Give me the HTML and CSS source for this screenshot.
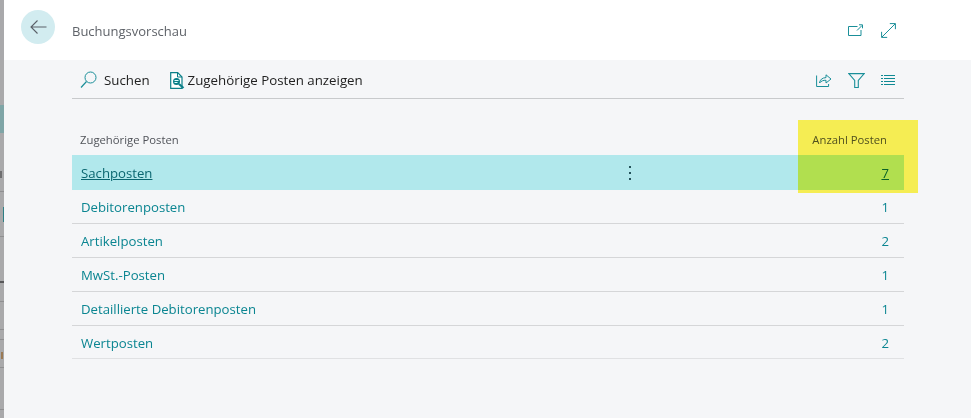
FILE: index.html
```html
<!DOCTYPE html>
<html lang="de">
<head>
<meta charset="utf-8">
<title>Buchungsvorschau</title>
<link rel="stylesheet" href="styles.css">
</head>
<body>
<div class="page">
  <aside class="backdrop">
    <i class="strip-teal"></i>
    <i class="strip-mark mark-ink"></i>
    <i class="strip-mark mark-teal"></i>
    <i class="strip-mark mark-orange"></i>
    <i class="strip-line l1"></i>
    <i class="strip-line l2"></i>
    <i class="strip-line l3"></i>
    <i class="strip-line l4"></i>
    <i class="strip-line l5"></i>
    <i class="strip-line l6"></i>
    <i class="strip-line l7"></i>
    <i class="strip-line l8"></i>
  </aside>
  <main class="dialog">
    <header class="titlebar">
      <button class="back" aria-label="Zurück">
        <svg width="17" height="14" viewBox="0 0 17 14"><path d="M16.500 7H1M7.500.5 1 7l6.500 6.500" fill="none" stroke="#5a6068" stroke-width="1.100"/></svg>
      </button>
      <h1 class="title">Buchungsvorschau</h1>
      <div class="window-actions">
        <svg width="15" height="12" viewBox="0 0 15 12"><path d="M9.500 2.500H.5v9h12.500V6M9 6.500 14 1.500M11 .8h3.500v3.500" fill="none" stroke="#1a8f99" stroke-width="1"/></svg>
        <svg width="15" height="15" viewBox="0 0 15 15"><path d="M.8 14.200 14.200.8M8.800.6h5.600v5.600M.6 8.800v5.600h5.600" fill="none" stroke="#1a8f99" stroke-width="1"/></svg>
      </div>
    </header>
    <section class="content">
      <nav class="toolbar">
        <span class="action">
          <svg width="17" height="18" viewBox="0 0 17 18"><circle cx="10.500" cy="6.500" r="5.500" fill="none" stroke="#1a8f99" stroke-width="1"/><path d="M6.500 10.500 1 16.500" stroke="#1a8f99" stroke-width="1.200"/></svg>
          Suchen
        </span>
        <span class="action action-tight">
          <svg width="15" height="17" viewBox="0 0 15 17"><path d="M.7.7h7l4.300 4.300v11.300H.7z" fill="#fff" stroke="#0b7f88" stroke-width="1.200"/><path d="M7.500.7v4.300h4.500" fill="none" stroke="#0b7f88"/><circle cx="6.500" cy="9.500" r="3.500" fill="#0b7f88"/><path d="M4.500 8.500h4M4.500 10.500h3" stroke="#dff" stroke-width="1"/><path d="m9 12 4.500 4" stroke="#0b7f88" stroke-width="2.200"/></svg>
          Zugehörige Posten anzeigen
        </span>
        <span class="toolbar-icons">
          <svg width="16" height="14" viewBox="0 0 16 14"><path d="M.6 2.500v11h12V11M3.500 10c.4-3.200 2.700-5.300 6.500-5.400V1.800l5 4.200-5 4V7.300C7.500 7.100 5 8 3.500 10z" fill="none" stroke="#1a8f99" stroke-width="1"/></svg>
          <svg width="17" height="15" viewBox="0 0 17 15"><path d="M.8.600h15.400L10.300 7.500v7H6.700v-7z" fill="none" stroke="#1a8f99" stroke-width="1.100"/></svg>
          <svg width="14" height="10" viewBox="0 0 14 10"><path d="M0 .5h2M3 .5h11M0 3.500h2M3 3.500h11M0 6.500h2M3 6.500h11M0 9.500h2M3 9.500h11" stroke="#0f8a94" stroke-width="1"/></svg>
        </span>
      </nav>
      <table class="entries">
        <thead>
          <tr><th class="name">Zugehörige Posten</th><th class="count">Anzahl Posten</th></tr>
        </thead>
        <tbody>
          <tr class="selected"><td class="name"><a>Sachposten</a><span class="kebab"><i></i><i></i><i></i></span></td><td class="count"><a>7</a></td></tr>
          <tr><td class="name"><a>Debitorenposten</a></td><td class="count"><a>1</a></td></tr>
          <tr><td class="name"><a>Artikelposten</a></td><td class="count"><a>2</a></td></tr>
          <tr><td class="name"><a>MwSt.-Posten</a></td><td class="count"><a>1</a></td></tr>
          <tr><td class="name"><a>Detaillierte Debitorenposten</a></td><td class="count"><a>1</a></td></tr>
          <tr><td class="name"><a>Wertposten</a></td><td class="count"><a>2</a></td></tr>
        </tbody>
      </table>
    </section>
    <div class="marker"></div>
  </main>
</div>
</body>
</html>
```
FILE: styles.css
```css
* { box-sizing: border-box; }
html, body { margin: 0; height: 100%; }
body {
  font-family: "Open Sans", "Noto Sans", sans-serif;
  font-size: 13.200px;
  color: #333;
  overflow: hidden;
}
.page { display: flex; height: 418px; width: 971px; }
.backdrop { position: relative; width: 4px; background: #a9a9ab; flex: none; }
.strip-teal { position: absolute; left: 0; top: 105px; width: 4px; height: 28px; background: #7fa5a7; }
.strip-mark { position: absolute; }
.mark-ink { left: 0; top: 171px; width: 2px; height: 7px; background: #6e6e70; }
.mark-teal { left: 3px; top: 207px; width: 1px; height: 15px; background: #2e7f85; }
.mark-orange { left: 1px; top: 352px; width: 2px; height: 7px; background: #9b7a55; }
.strip-line { position: absolute; left: 0; width: 4px; height: 1px; background: #8f8f91; }
.l1 { top: 191px; } .l2 { top: 236px; }
.l3 { top: 281px; background: #58585a; height: 2px; }
.l4 { top: 301px; } .l5 { top: 329px; } .l6 { top: 339px; } .l7 { top: 367px; } .l8 { top: 409px; }

.dialog { position: relative; flex: 1; display: flex; flex-direction: column; background: #f5f6f8; }
.titlebar { height: 60px; flex: none; background: #fff; display: flex; align-items: center; padding: 0 75px 0 17px; }
.back { width: 34px; height: 34px; padding: 0; border: 0; border-radius: 50%; background: #d2ecf0; display: flex; align-items: center; justify-content: center; margin: -6px 0 0; }
.title { margin: 2px 0 0 17px; font-size: 13px; font-weight: 400; color: #5f6369; }
.window-actions { margin-left: auto; display: flex; align-items: center; gap: 18px; }

.content { padding: 0 67px 0 68px; }
.toolbar { height: 39px; display: flex; align-items: center; border-bottom: 1px solid #c8cacc; padding: 2px 0 0 8px; color: #222; font-size: 13.300px; }
.action { display: flex; align-items: center; gap: 7px; margin-right: 20px; }
.action-tight { gap: 3px; }
.toolbar-icons { margin-left: auto; margin-right: 9px; display: flex; align-items: center; gap: 16px; }

.entries { width: 100%; border-collapse: collapse; margin-top: 21px; table-layout: fixed; }
.entries th { font-weight: 400; font-size: 11.300px; color: #505359; height: 35px; padding: 4px 0 0; text-align: left; }
.entries th.name { padding-left: 8px; }
.entries th.count { width: 120px; text-align: right; padding-right: 17px; }
.entries td { height: 34px; padding: 1px 0 0; border-bottom: 1px solid #d5d6d8; color: #0a8591; }
.entries td.name { padding-left: 9px; position: relative; }
.entries td.count { text-align: right; padding-right: 15px; }
.entries tr:last-child td { height: 33px; padding-top: 2px; border-bottom-color: #e0e1e3; }
.selected td { padding-top: 2px; background: #b1e8ec; border-bottom-color: #b1e8ec; }
.selected a { text-decoration: underline; color: #0a6670; }
.kebab { position: absolute; left: 557px; top: 11px; display: flex; flex-direction: column; gap: 4px; }
.kebab i { display: block; width: 2px; height: 2px; background: #23525a; }

.marker { position: absolute; left: 794px; top: 120px; width: 120px; height: 73px; background: #fff655; mix-blend-mode: multiply; }
```
